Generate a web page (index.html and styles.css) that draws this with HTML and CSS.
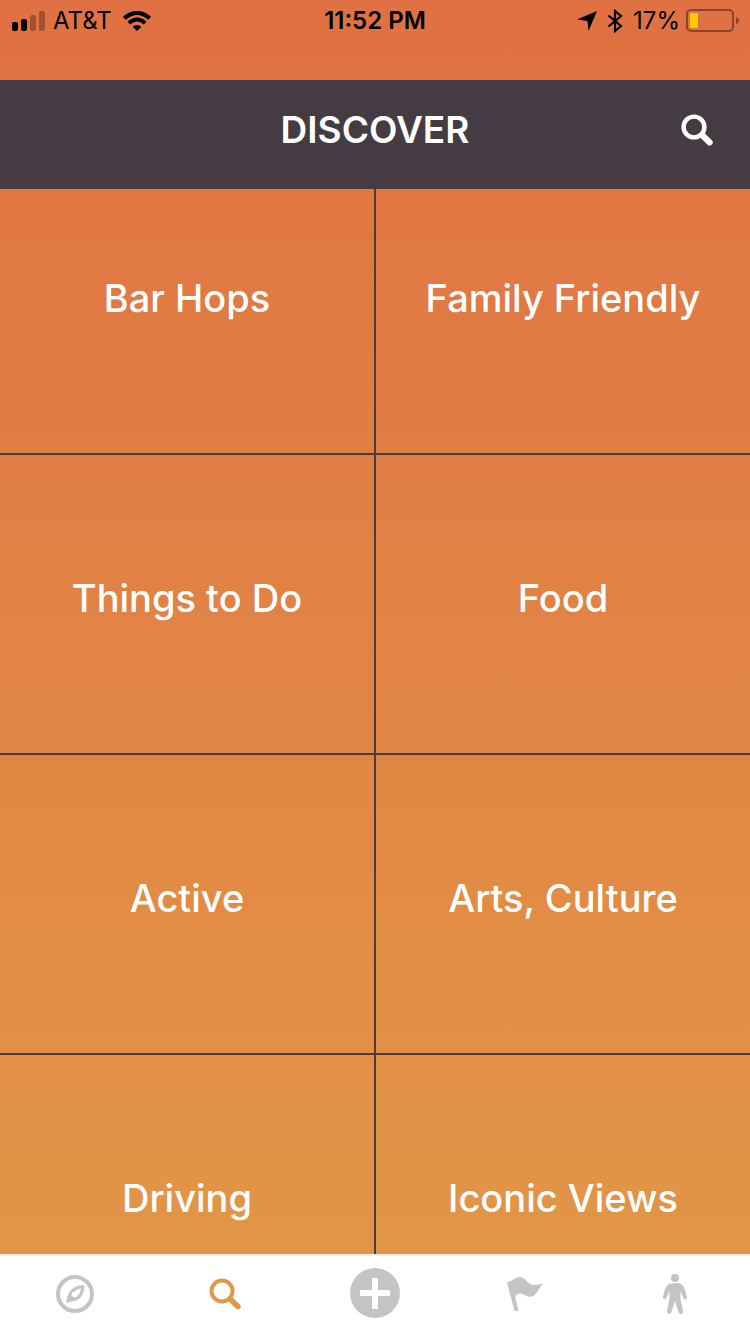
FILE: index.html
```
<!DOCTYPE html>
<html lang="en">
<head>
    <meta charset="UTF-8">
    <meta name="viewport" content="width=device-width, initial-scale=1.0">
    <title>Discover</title>
    <link rel="stylesheet" href="styles.css">
</head>
<body>
    <div class="status-bar">
        <div class="status-left">
            <svg class="signal" width="34" height="20" viewBox="0 0 34 20">
                <rect x="0" y="11" width="6" height="9" rx="2"/>
                <rect x="9" y="8" width="6" height="12" rx="2"/>
                <rect x="18" y="4" width="6" height="16" rx="2" opacity="0.28"/>
                <rect x="27" y="0" width="6" height="20" rx="2" opacity="0.28"/>
            </svg>
            <span>AT&amp;T</span>
            <svg class="wifi" width="28" height="20" viewBox="0 0 28 20">
                <path d="M1.3 7.2Q14-3.6 26.7 7.2" fill="none" stroke="#000" stroke-width="4.2"/>
                <path d="M5.8 12Q14 5 22.2 12" fill="none" stroke="#000" stroke-width="4"/>
                <path d="M14 20L9.6 15.8Q14 12.4 18.400 15.800Z"/>
            </svg>
        </div>
        <div class="status-time">11:52 PM</div>
        <div class="status-right">
            <svg width="20" height="20" viewBox="0 0 20 20">
                <path d="M20 0L11.5 20L10.5 10L0 8.6Z"/>
            </svg>
            <svg class="bluetooth" width="16" height="24" viewBox="0 0 16 24">
                <path d="M1.5 6.5L14 17L8 22V2L14 7L1.5 17.5" fill="none" stroke="#000" stroke-width="2.2"/>
            </svg>
            <span>17%</span>
            <svg class="battery" width="54" height="24" viewBox="0 0 54 24">
                <rect x="1" y="1" width="46" height="21" rx="4" fill="none" stroke="#8b4629" stroke-width="2"/>
                <rect x="4" y="4" width="8" height="15" rx="1" fill="#ffcc00"/>
                <path d="M50 8Q53 9 53 11.5T50 15Z" fill="#8b4629"/>
            </svg>
        </div>
    </div>

    <header class="header">
        <h1>DISCOVER</h1>
        <button type="button" class="search-button" aria-label="Search">
            <svg width="34" height="36" viewBox="0 0 34 36" fill="none" stroke="#fff">
                <circle cx="14" cy="15" r="10.4" stroke-width="4.4"/>
                <path d="M22 23L29.700 30.500" stroke-width="6" stroke-linecap="round"/>
            </svg>
        </button>
    </header>

    <main class="categories">
        <div class="grid">
            <a href="#" class="tile">Bar Hops</a>
            <a href="#" class="tile">Family Friendly</a>
            <a href="#" class="tile">Things to Do</a>
            <a href="#" class="tile">Food</a>
            <a href="#" class="tile">Active</a>
            <a href="#" class="tile">Arts, Culture</a>
            <a href="#" class="tile">Driving</a>
            <a href="#" class="tile">Iconic Views</a>
        </div>
    </main>

    <nav class="tab-bar">
        <a href="#" class="tab" aria-label="Explore">
            <svg width="40" height="40" viewBox="0 0 40 40">
                <circle cx="20" cy="20" r="17" fill="none" stroke="currentColor" stroke-width="4"/>
                <path fill="currentColor" fill-rule="evenodd" d="M29.2 11C30 17 27.5 23.5 21.5 26.2L11 29C11.8 26.5 12 21.5 15 17.5C18 13 23 11.3 29.2 11ZM26 14.2C22.5 15 19.5 17.2 18 19.5L16.8 21.5L20.2 23.8C23.8 21.5 25.5 18.5 26 14.2Z"/>
                <circle cx="19.5" cy="20.5" r="2.8" fill="#fff"/>
            </svg>
        </a>
        <a href="#" class="tab active" aria-label="Discover">
            <svg width="34" height="34" viewBox="0 0 34 34" fill="none" stroke="currentColor">
                <circle cx="14" cy="14" r="10.5" stroke-width="4"/>
                <path d="M22 22L30 29.5" stroke-width="5.5" stroke-linecap="round"/>
            </svg>
        </a>
        <a href="#" class="tab" aria-label="Add">
            <svg width="50" height="52" viewBox="0 0 50 52">
                <circle cx="25" cy="25" r="25" fill="currentColor"/>
                <path d="M25 10V41M10 25H40" stroke="#fff" stroke-width="6"/>
            </svg>
        </a>
        <a href="#" class="tab" aria-label="Flagged">
            <svg width="36" height="36" viewBox="0 0 36 36" fill="currentColor">
                <path d="M0 6.5C5 5 8 1.5 12.5 1C18 1 19.5 7 25 8.8C29 9.5 32 8 36 7.5C32 12 29.5 20 24 20.8C19 21 16.5 17 12.5 17.5C9.5 18 8.5 19.5 8.2 21L11.5 35H7.5Z"/>
            </svg>
        </a>
        <a href="#" class="tab" aria-label="Profile">
            <svg width="24" height="40" viewBox="0 0 24 40">
                <circle cx="12" cy="4" r="4" fill="currentColor"/>
                <path fill="currentColor" d="M7 9.5Q12 8.5 17 9.5C21 11 22.5 16 24 23Q24 25.5 22.5 25.5Q21 25.5 20.5 24L17.5 17V25L20 37Q20 40 18 40Q16 40 15.5 38L12 27L8.5 38Q8 40 6 40Q4 40 4 37L6.5 25V17L3.5 24Q3 25.5 1.5 25.5Q0 25.5 0 23C1.5 16 3 11 7 9.5Z"/>
            </svg>
        </a>
    </nav>
</body>
</html>
```
FILE: styles.css
```
* {
    box-sizing: border-box;
}
body {
    display: flex;
    flex-direction: column;
    height: 100vh;
    margin: 0;
    background: linear-gradient(#e07142, #e29847);
    font-family: Inter, "Liberation Sans", sans-serif;
}
svg {
    display: block;
    flex-shrink: 0;
}

/* Status bar */
.status-bar {
    display: grid;
    grid-template-columns: 1fr auto 1fr;
    align-items: start;
    height: 80px;
    padding: 0 12px;
    color: #000;
    font-size: 24px;
    line-height: 42px;
}
.status-left,
.status-right {
    display: flex;
    align-items: center;
    height: 42px;
}
.status-left {
    gap: 7px;
}
.status-right {
    justify-content: flex-end;
    gap: 10px;
}
.wifi {
    margin-left: 4px;
}
.status-time {
    font-weight: 600;
}
.battery {
    margin: 0 -2px 0 -4px;
}

/* Header */
.header {
    display: grid;
    grid-template-columns: 1fr auto 1fr;
    align-items: center;
    height: 109px;
    padding: 0 36px 10px;
    background-color: #443c42;
    color: #fff;
}
.header h1 {
    grid-column: 2;
    margin: 0;
    font-size: 37px;
    font-weight: 600;
    line-height: 46px;
}
.search-button {
    justify-self: end;
    padding: 0;
    border: none;
    background: none;
    cursor: pointer;
}

/* Category tiles, first row sits partly under the header */
.categories {
    flex: 1;
    min-height: 0;
    overflow: hidden;
}
.grid {
    display: grid;
    grid-template-columns: calc(50% - 1px) 1fr;
    grid-auto-rows: 300px;
    margin-top: -34px;
}
.tile {
    display: flex;
    align-items: center;
    justify-content: center;
    padding-bottom: 12px;
    border-bottom: 2px solid #4b3d3c;
    color: #fff;
    font-size: 38px;
    font-weight: 500;
    text-decoration: none;
}
.tile:nth-child(even) {
    border-left: 2px solid #4b3d3c;
}

/* Tab bar */
.tab-bar {
    display: flex;
    height: 80px;
    padding-bottom: 2px;
    border-top: 2px solid #f5ebdc;
    background-color: #fff;
}
.tab {
    display: flex;
    flex: 1;
    align-items: center;
    justify-content: center;
    color: #c5c3c6;
}
.tab.active {
    color: #e09848;
}
```
